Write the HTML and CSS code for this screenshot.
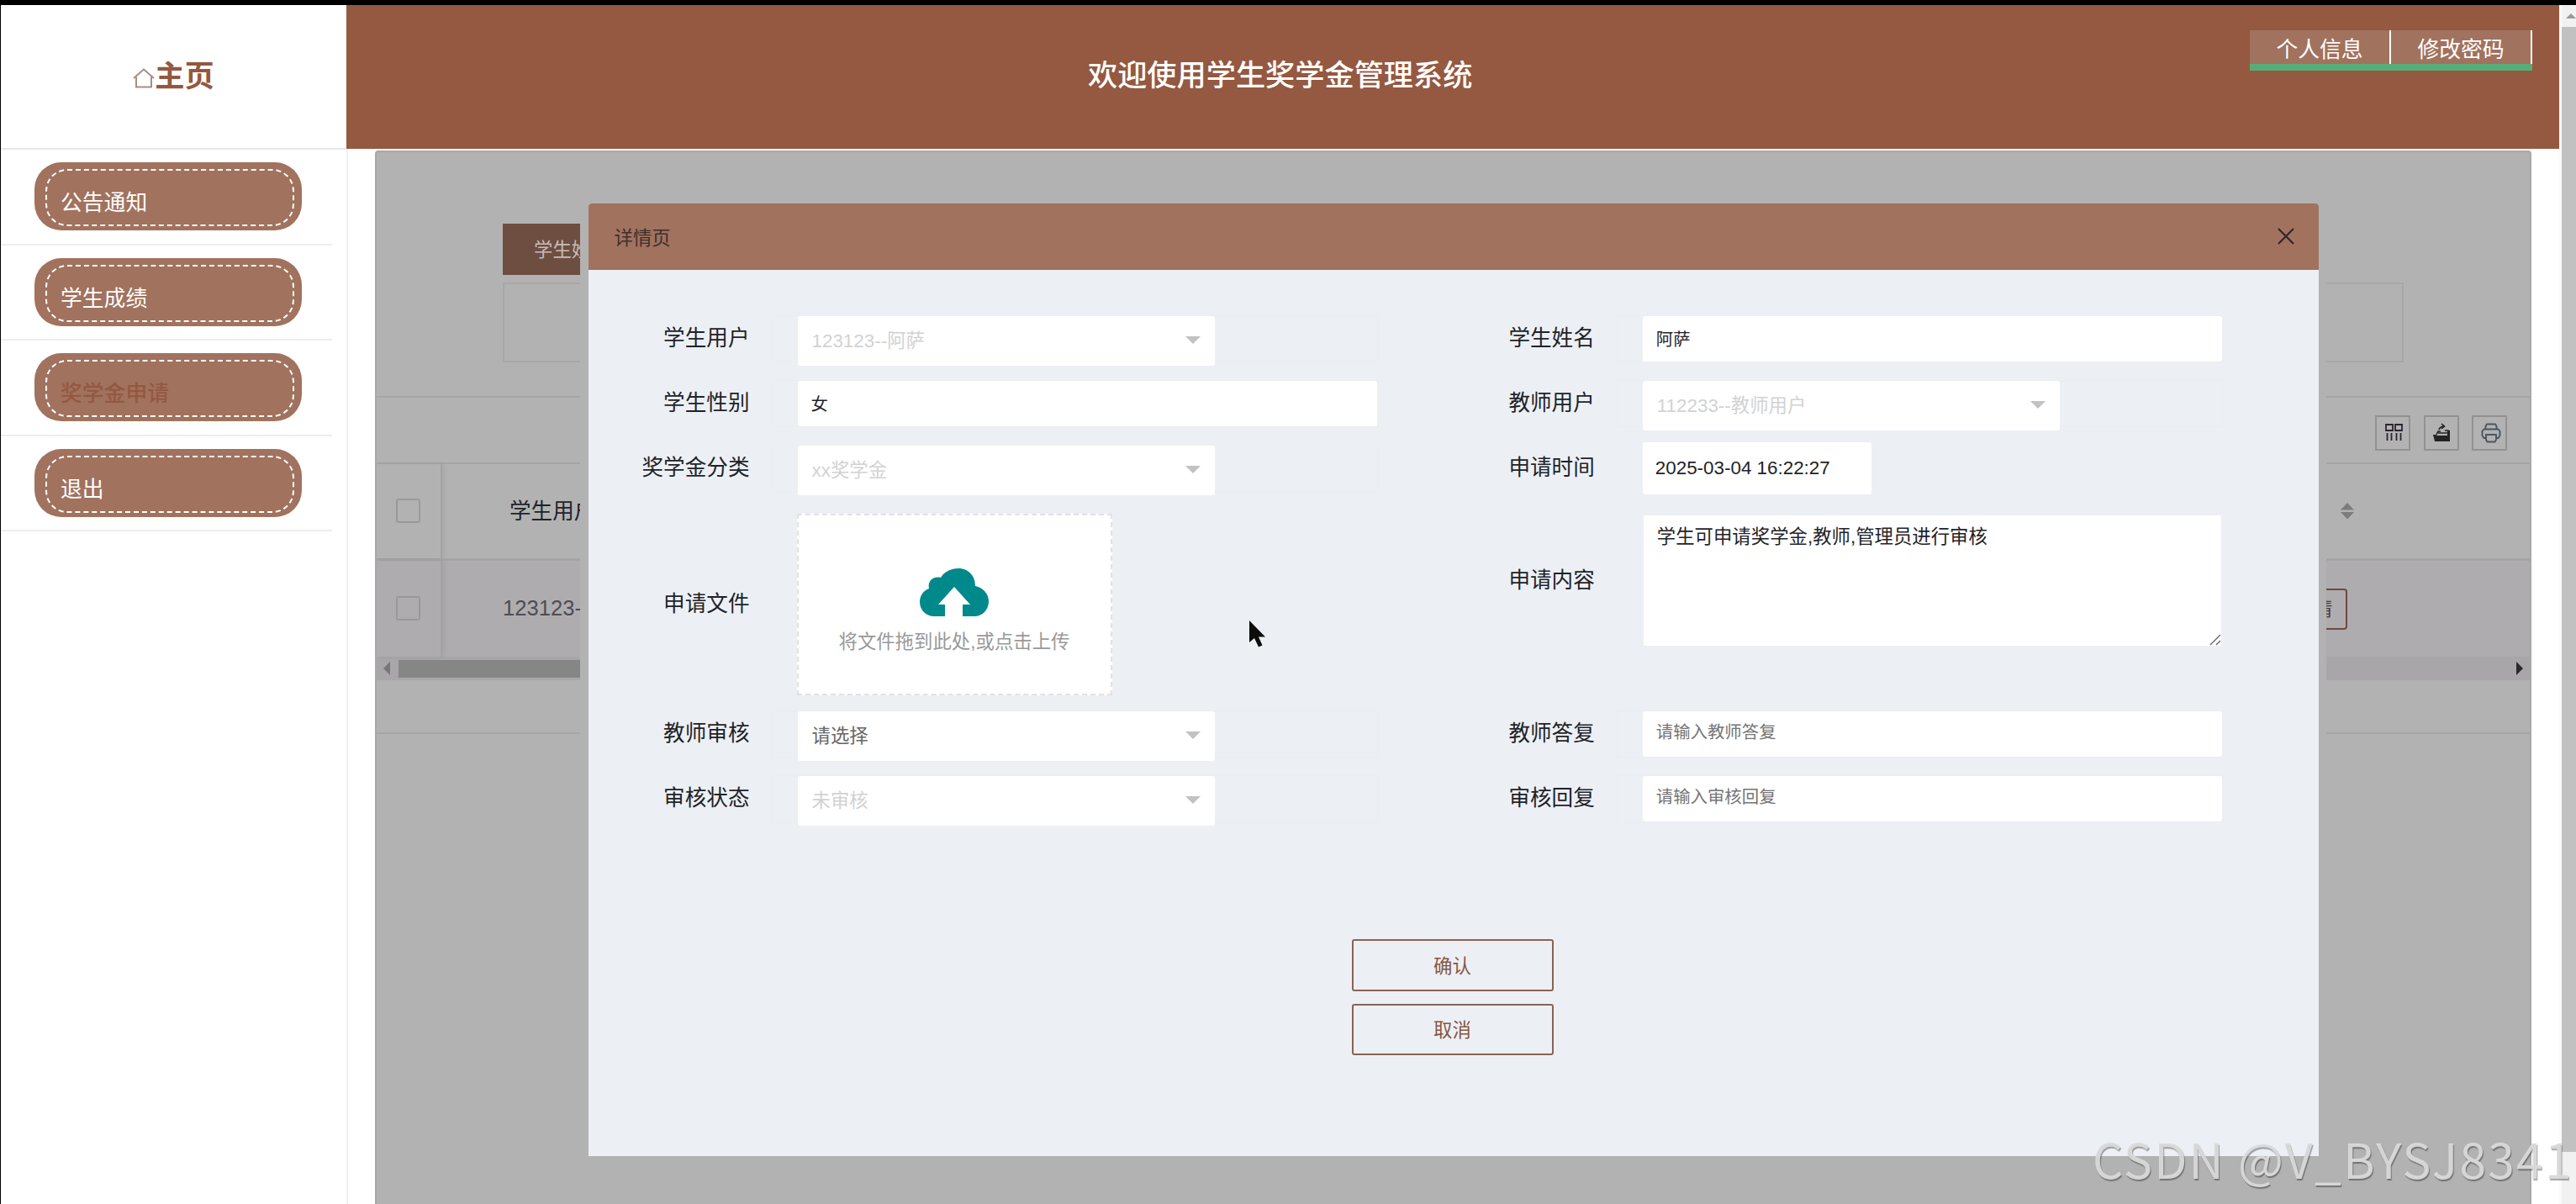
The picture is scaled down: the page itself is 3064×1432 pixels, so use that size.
FILE: index.html
```html
<!DOCTYPE html>
<html lang="zh-CN">
<head>
  <meta charset="UTF-8">
  <title>学生奖学金管理系统</title>
  <link rel="stylesheet" href="styles.css">
</head>
<body>

  <div class="page">
    <aside class="sidebar">
      <div class="home">
        <svg class="home-icon" viewBox="0 0 26 24"><path d="M1 12 L13 1.5 L25 12 M4 10.5 V22.5 H22 V10.5"/></svg>
        <span>主页</span>
      </div>
      <ul class="menu">
        <li><a class="menu-btn"><span>公告通知</span></a></li>
        <li><a class="menu-btn"><span>学生成绩</span></a></li>
        <li><a class="menu-btn active"><span>奖学金申请</span></a></li>
        <li><a class="menu-btn"><span>退出</span></a></li>
      </ul>
    </aside>

    <div class="main">
      <header class="topbar">
        <h1>欢迎使用学生奖学金管理系统</h1>
        <nav class="user-nav">
          <a>个人信息</a>
          <a>修改密码</a>
        </nav>
      </header>

      <!-- 列表页，被遮罩压暗 -->
      <section class="panel">
        <div class="search">
          <div class="search-label">学生姓名</div>
          <div class="search-box"></div>
        </div>
        <div class="toolbar">
          <div class="tool">
            <svg viewBox="0 0 24 24" fill="none" stroke="#2b2430" stroke-width="1.8"><path d="M2 2h8v7H2zM13 2h8v7h-8zM3.5 12v9M8.5 12v9M14.5 12v9M19.5 12v9"/></svg>
          </div>
          <div class="tool">
            <svg viewBox="0 0 24 24"><path fill="#222" d="M1 14h3l2 1h12V9h3v13H3z"/><path fill="none" stroke="#222" stroke-width="1.6" d="M5 14l2-4h3M7 12h12V9h-4M8 8c1-3 3-4 6-4M11 1l3.500 3-3.500 3"/></svg>
          </div>
          <div class="tool">
            <svg viewBox="0 0 24 24" fill="none" stroke="#4d5560" stroke-width="1.9"><path d="M5.500 7.500V4L7 1.500h10L18.500 4v3.500M6 18H3.500L1.500 15V10l2-2.500h17l2 2.500v5l-2 3H18M6 14h12v6l-1.500 2.500h-9L6 20z"/></svg>
          </div>
        </div>
        <div class="table">
          <div class="tr th">
            <div class="check"><i></i></div>
            <div class="user">学生用户</div>
            <div class="action">操作
              <svg class="sort" viewBox="0 0 16 20"><path d="M0 8.500 L8 0 L16 8.500zM0 11 L8 19.500 L16 11z"/></svg>
            </div>
          </div>
          <div class="tr td">
            <div class="check"><i></i></div>
            <div class="user">123123--阿萨</div>
            <div class="action"><span class="detail">详情</span></div>
          </div>
          <div class="hscroll">
            <i class="arrow-left"></i>
            <div class="hthumb"></div>
            <i class="arrow-right"></i>
          </div>
        </div>
        <div class="pager"></div>
      </section>
    </div>

    <div class="vscroll">
      <i class="arrow-up"></i>
      <div class="vthumb"></div>
    </div>
  </div>

  <!-- 详情弹窗 -->
  <div class="layer">
    <div class="modal">
      <div class="modal-head">
        <span>详情页</span>
        <svg class="close" viewBox="0 0 20 20"><path d="M1 1 L19 19 M19 1 L1 19"/></svg>
      </div>
      <form class="form">
        <div class="item">
          <label>学生用户</label>
          <div class="box"><div class="select disabled">123123--阿萨</div></div>
        </div>
        <div class="item">
          <label>学生姓名</label>
          <div class="box"><input type="text" value="阿萨"></div>
        </div>
        <div class="item">
          <label>学生性别</label>
          <div class="box"><input type="text" value="女"></div>
        </div>
        <div class="item">
          <label>教师用户</label>
          <div class="box"><div class="select disabled">112233--教师用户</div></div>
        </div>
        <div class="item">
          <label>奖学金分类</label>
          <div class="box"><div class="select disabled">xx奖学金</div></div>
        </div>
        <div class="item">
          <label>申请时间</label>
          <div class="box plain"><input class="date" type="text" value="2025-03-04 16:22:27"></div>
        </div>
        <div class="item tall">
          <label>申请文件</label>
          <div class="upload">
            <svg class="cloud" viewBox="0 0 82 57"><path fill-rule="evenodd" d="M30 57H17C7 57 0 49 0 40C0 32 5 26 11 24C9 15 16 9 25 11C29 4 37 0 46 0C58 0 66 9 66 21C76 23 82 31 82 39C82 49 75 57 65 57H51V43H60L41 22L22 43H30Z"/></svg>
            <p>将文件拖到此处,或点击上传</p>
          </div>
        </div>
        <div class="item text">
          <label>申请内容</label>
          <div class="area">
            <textarea>学生可申请奖学金,教师,管理员进行审核</textarea>
            <svg class="grip" viewBox="0 0 14 14"><path d="M1 13 L13 1 M8 13 L13 8"/></svg>
          </div>
        </div>
        <div class="item">
          <label>教师审核</label>
          <div class="box"><div class="select">请选择</div></div>
        </div>
        <div class="item">
          <label>教师答复</label>
          <div class="box"><input type="text" placeholder="请输入教师答复"></div>
        </div>
        <div class="item">
          <label>审核状态</label>
          <div class="box"><div class="select disabled">未审核</div></div>
        </div>
        <div class="item">
          <label>审核回复</label>
          <div class="box"><input type="text" placeholder="请输入审核回复"></div>
        </div>
      </form>
      <div class="btns">
        <button type="button">确认</button>
        <button type="button">取消</button>
      </div>
    </div>
  </div>

  <svg class="cursor" viewBox="0 0 20 32"><path d="M0 0 V26 L6 21 L11 31.500 L15.500 29.500 L11 19.500 H19z"/></svg>
  <div class="watermark">CSDN @V_BYSJ8341</div>

</body>
</html>
```
FILE: styles.css
```css
* {
  box-sizing: border-box;
  margin: 0;
  padding: 0;
}
body {
  font-family: "Liberation Sans", "Noto Sans CJK SC", sans-serif;
  font-size: 22.4px;
  color: #1f2328;
  background: #fff;
  overflow: hidden;
}
i {
  display: block;
}
.page {
  display: flex;
  height: 1432px;
  border-top: 6px solid #000;
  border-left: 1px solid #000;
}

/* 左侧菜单 */
.sidebar {
  width: 413px;
  border-right: 2px solid #f0f0f0;
}
.home {
  display: flex;
  align-items: center;
  justify-content: center;
  height: 172px;
  width: 411px;
  border-bottom: 2px solid #e8e8e8;
  color: #945840;
  font-size: 35.2px;
  font-weight: bold;
  line-height: 50px;
  padding-bottom: 1px;
}
.home-icon {
  width: 26px;
  height: 24px;
  margin-top: 4px;
  fill: none;
  stroke: #a78d84;
  stroke-width: 2;
}
.menu {
  list-style: none;
}
.menu li {
  height: 113.6px;
  width: 394px;
  padding: 15px 0 0 40px;
  border-bottom: 2px solid #eee;
}
.menu-btn {
  display: flex;
  width: 318px;
  height: 81px;
  padding: 8px 9px 5px 13px;
  border-radius: 32px;
  background: #a1725e;
  color: #fff;
  font-size: 25.8px;
}
.menu-btn span {
  flex: 1;
  border: 2px dashed #fff;
  border-radius: 26px;
  padding-left: 16px;
  line-height: 76px;
}
.menu-btn.active {
  color: #945840;
  font-weight: 500;
}

/* 顶部 */
.main {
  width: 2630px;
  display: flex;
  flex-direction: column;
}
.topbar {
  height: 171px;
  width: 2632px;
  margin-left: -2px;
  background: #955840;
  display: flex;
  justify-content: flex-end;
  align-items: flex-start;
  padding: 30px 32px 0 0;
  flex-shrink: 0;
}
.topbar h1 {
  flex: 1;
  padding-left: 882px;
  margin-top: 28px;
  color: #fff;
  font-size: 35.2px;
  font-weight: 500;
  line-height: 52px;
}
.user-nav {
  display: flex;
  border-bottom: 8px solid #57ad78;
}
.user-nav a {
  width: 168px;
  height: 40px;
  line-height: 47px;
  border-right: 2px solid #fff;
  background: #a1725e;
  color: #fff;
  font-size: 25.8px;
  text-align: center;
}

/* 列表 */
.panel {
  flex: 1;
  width: 2565px;
  margin: 2px 0 0 32px;
  background: #b2b2b2;
  border: 2px solid #a8a8a8;
  border-bottom: 0;
  border-radius: 4px 4px 0 0;
}
.search {
  height: 292px;
  padding: 85px 150px 0 150px;
  border-bottom: 2px solid #a5a5a5;
}
.search-label {
  width: 160px;
  height: 61px;
  padding-left: 37px;
  line-height: 63px;
  background: #6e4e41;
  color: #c6bcb8;
}
.search-box {
  height: 95px;
  margin-top: 9px;
  border: 2px solid #a7a7a7;
}
.toolbar {
  display: flex;
  justify-content: flex-end;
  gap: 15.500px;
  height: 79px;
  padding: 21px 27px 0 0;
  border-bottom: 2px solid #a5a5a5;
}
.tool {
  width: 42px;
  height: 42px;
  border: 2px solid #929292;
  display: flex;
  align-items: center;
  justify-content: center;
}
.tool svg {
  width: 24px;
  height: 24px;
  margin-left: 3px;
}
.tr {
  display: flex;
  align-items: stretch;
  font-size: 25.6px;
}
.th {
  height: 115px;
  border-bottom: 3px solid #a5a5a5;
}
.td {
  height: 114px;
  background: #afacaf;
  color: #4b4e54;
}
.check {
  width: 78px;
  padding: 0 2px 1px 0;
  border-right: 2px solid #a2a2a4;
  box-shadow: 3px 0 5px rgba(0, 0, 0, .05);
  display: flex;
  align-items: center;
  justify-content: center;
}
.check i {
  width: 29px;
  height: 29px;
  border: 2px solid #999;
  border-radius: 3px;
}
.user {
  flex: 1;
  padding-left: 72px;
  line-height: 112px;
}
.th .user {
  padding-left: 80px;
}
.action {
  width: 294px;
  display: flex;
  align-items: center;
}
.th .action {
  padding-left: 1px;
}
.sort {
  width: 16px;
  height: 20px;
  margin-left: 17px;
  fill: #7c7c7c;
}
.detail {
  width: 80px;
  height: 49px;
  line-height: 46px;
  margin-left: -3px;
  border: 2px solid #6b4b40;
  border-radius: 4px;
  color: #4a3a38;
  font-size: 22.4px;
  text-align: center;
}
.hscroll {
  display: flex;
  align-items: center;
  height: 28px;
  background: #a8a6a9;
  padding: 0 8px;
}
.arrow-left,
.arrow-right {
  border: 8px solid transparent;
}
.arrow-left {
  border-left: 0;
  border-right-color: #777;
}
.arrow-right {
  border-right: 0;
  border-left-color: #2a2a2a;
  margin-left: auto;
}
.hthumb {
  width: 900px;
  height: 21px;
  margin-left: 10px;
  background: #868686;
}
.pager {
  height: 64px;
  border-bottom: 2px solid #a5a5a5;
}

/* 浏览器滚动条 */
.vscroll {
  width: 20px;
  background: #f1f1f1;
  border-left: 3px solid #fafafa;
}
.arrow-up {
  border: 6px solid transparent;
  border-top: 0;
  border-bottom-color: #999;
  margin: 10px 0 10px 5px;
}
.vthumb {
  height: 1338px;
  background: #c1c1c1;
}

/* 弹窗 */
.layer {
  position: absolute;
  left: 690px;
  top: 242px;
  padding: 0 9.500px;
  background: #b2b2b2;
}
.modal {
  width: 2058px;
  height: 1133px;
  background: #ecf0f5;
  border-radius: 4px 4px 0 0;
  overflow: hidden;
}
.modal-head {
  height: 79px;
  padding: 0 29px 2px 31px;
  background: #a1725e;
  color: #3d2f2c;
  display: flex;
  align-items: center;
  justify-content: space-between;
}
.close {
  width: 20px;
  height: 20px;
  stroke: #33262a;
  stroke-width: 2.2;
}
.form {
  display: grid;
  grid-template-columns: 1005.300px 1005.300px;
  grid-template-rows: 77px 77px 81.500px 234.500px 77px 77px;
  padding-top: 54px;
}
.item {
  display: flex;
  align-items: center;
  height: 55px;
}
.item label {
  width: 192px;
  margin-right: 25px;
  text-align: right;
  font-size: 25.6px;
  line-height: 40px;
  padding-bottom: 1px;
}
.box {
  width: 723px;
  height: 56px;
  padding-left: 31px;
  border: 1px solid #eaedf1;
}
.plain {
  border-color: transparent;
}
.select,
input {
  display: block;
  width: 689px;
  height: 54px;
  padding: 0 16px 2px;
  border: 0;
  border-radius: 3px;
  background: #fff;
  font-family: inherit;
  font-size: 20.400px;
  color: #1f2328;
}
input::placeholder {
  color: #757575;
}
.select {
  position: relative;
  width: 496px;
  height: 59px;
  padding-left: 17px;
  line-height: 60px;
  font-size: 22.4px;
  color: #666;
}
.select::after {
  content: "";
  position: absolute;
  right: 17px;
  top: 24px;
  border: 9.500px solid transparent;
  border-top-color: #c2c2c2;
  border-bottom: 0;
}
.disabled {
  color: #d2d2d2;
}
.date {
  width: 272px;
  height: 62px;
  margin-top: -4px;
  padding: 0 15px;
  font-size: 22.4px;
}
.tall {
  height: 216px;
}
.upload {
  width: 375px;
  height: 216px;
  margin-left: 31px;
  border: 2px dashed #e2e2e2;
  background: #fff;
  text-align: center;
  color: #999;
  padding-top: 63px;
}
.cloud {
  display: block;
  width: 82px;
  height: 57px;
  margin: 0 auto 14px;
  fill: #00898b;
}
.upload p {
  line-height: 34px;
}
.text {
  height: 158px;
  margin-top: 1px;
}
.area {
  position: relative;
  width: 689px;
  height: 157px;
  margin-left: 32px;
}
.area textarea {
  display: block;
  width: 100%;
  height: 100%;
  padding: 10px 16px;
  border: 1px solid #eee;
  resize: none;
  background: #fff;
  font-family: inherit;
  font-size: 22.4px;
  line-height: 32px;
  color: #1f2328;
}
.grip {
  position: absolute;
  right: 1px;
  bottom: 1px;
  width: 14px;
  height: 14px;
  stroke: #666;
  stroke-width: 1.4;
}
.btns {
  display: flex;
  flex-direction: column;
  gap: 15px;
  width: 240px;
  margin: 118px 0 0 908px;
}
.btns button {
  height: 61.500px;
  padding-bottom: 2px;
  border: 2px solid #8b6354;
  border-radius: 3px;
  background: transparent;
  color: #86563f;
  font-family: inherit;
  font-size: 22.4px;
}

.cursor {
  position: absolute;
  left: 1486px;
  top: 738px;
  width: 20px;
  height: 32px;
  fill: #0c0c0c;
}
.watermark {
  position: absolute;
  left: 2489px;
  top: 1336px;
  font-family: "Noto Sans CJK SC", sans-serif;
  font-weight: 400;
  font-size: 57px;
  letter-spacing: 2.200px;
  line-height: 82px;
  color: rgba(218, 218, 218, .95);
  text-shadow: 1px 2px 1px rgba(0, 0, 0, .35);
  white-space: nowrap;
}
```
